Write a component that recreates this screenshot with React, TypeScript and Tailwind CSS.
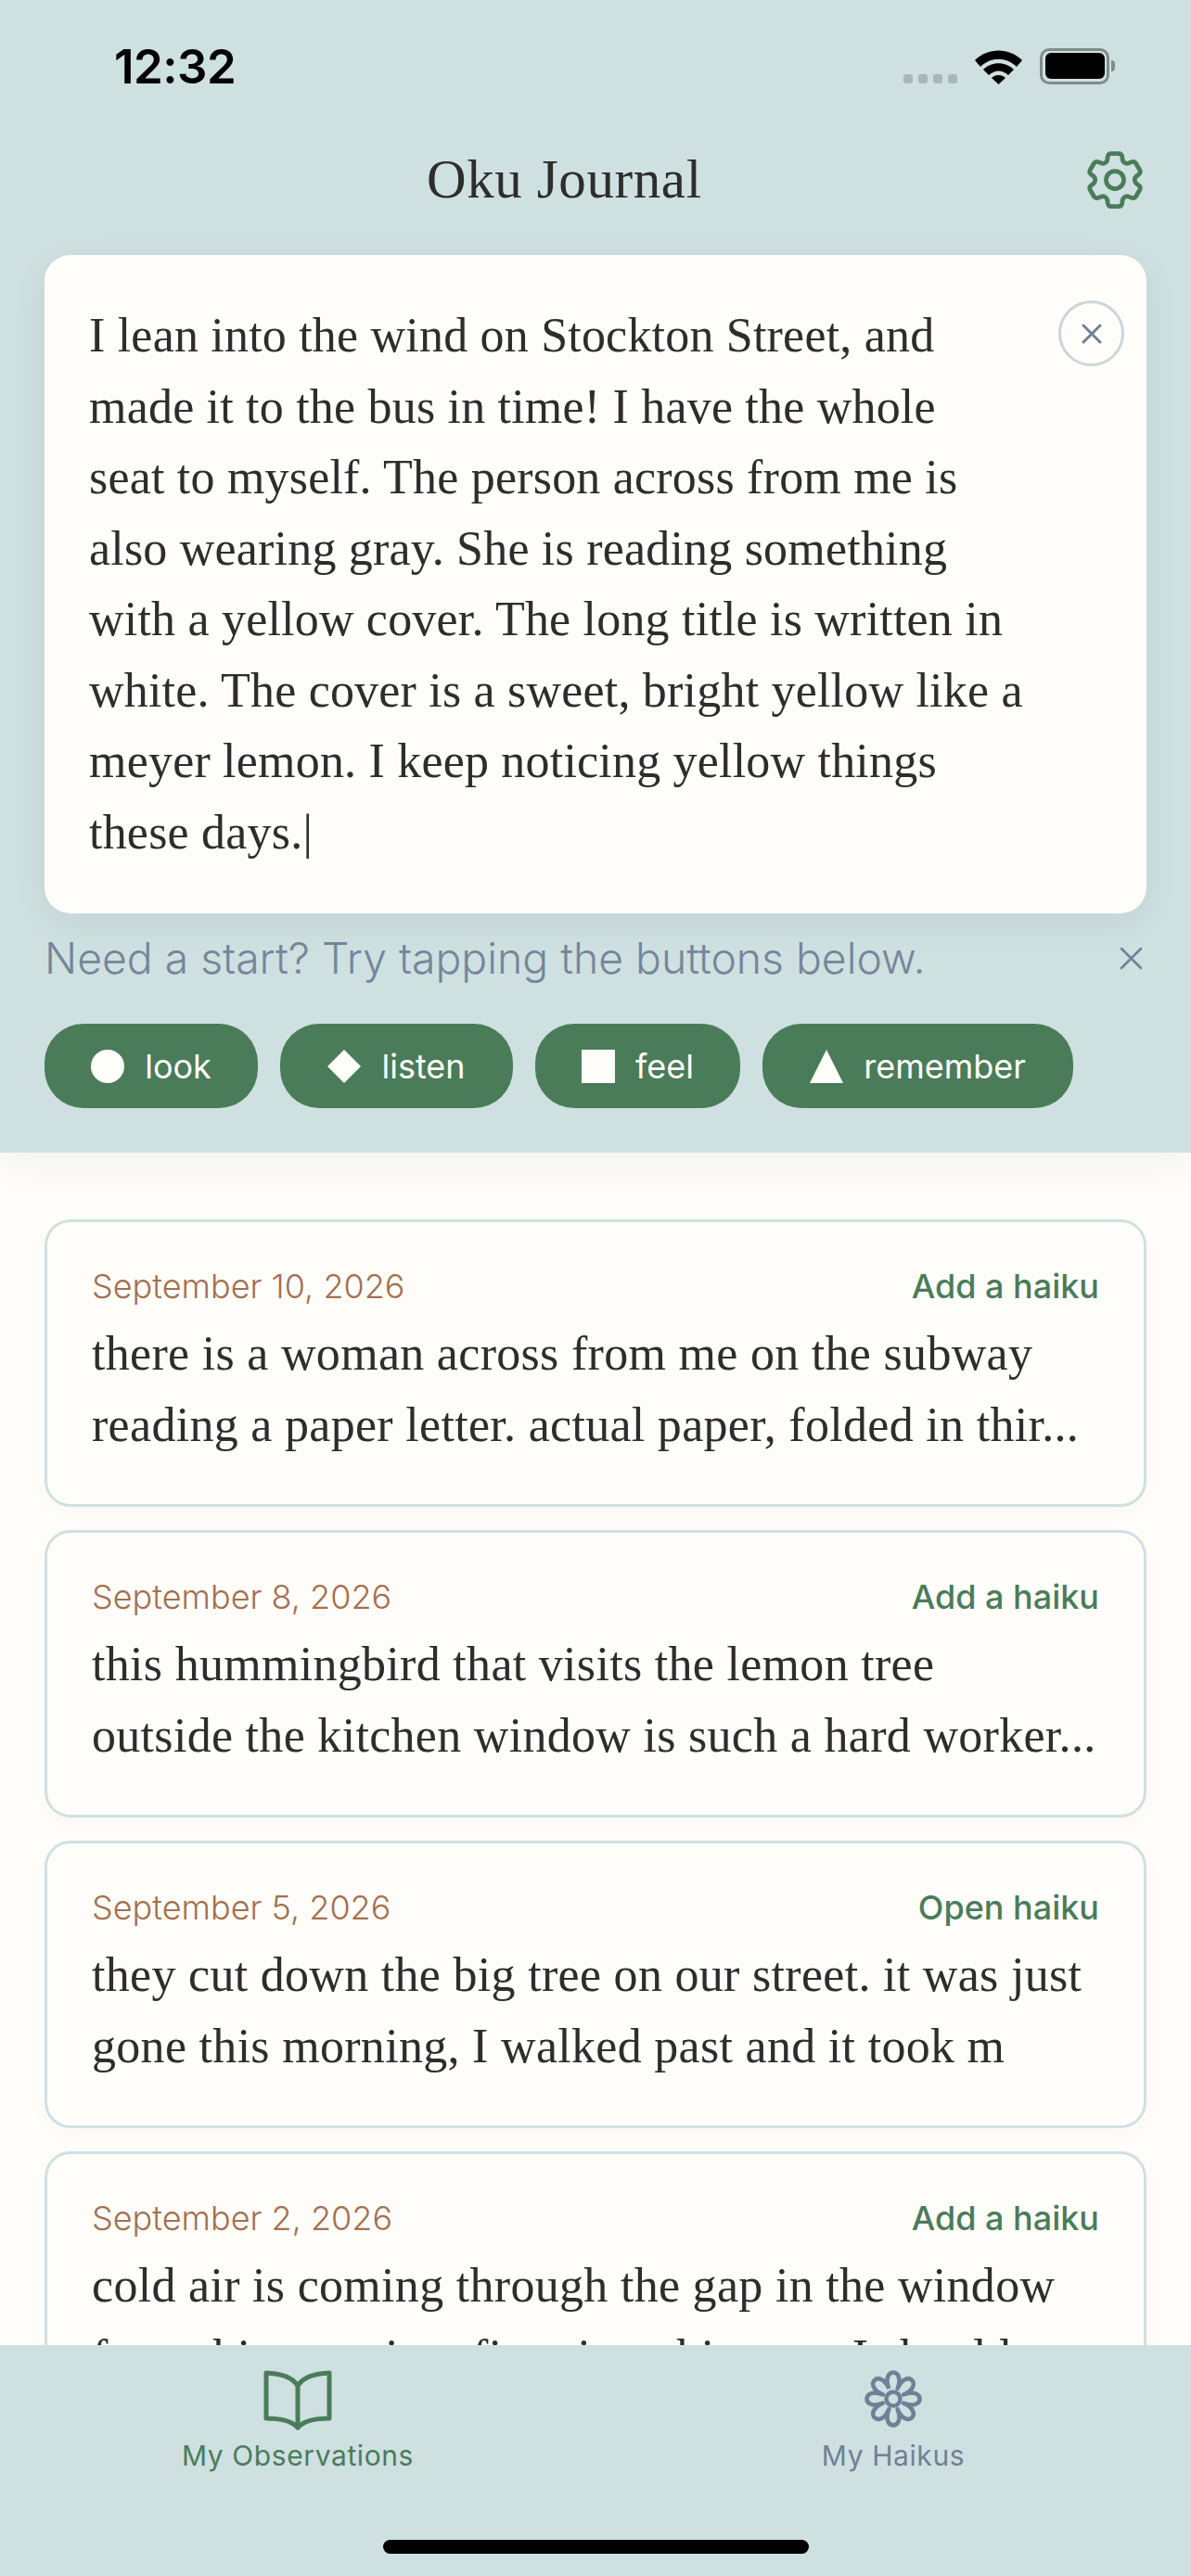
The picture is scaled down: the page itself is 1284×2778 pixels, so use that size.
import { HiOutlineCog6Tooth } from 'react-icons/hi2';

const serif = "font-['Liberation_Serif',serif]";

const draft = [
    'I lean into the wind on Stockton Street, and',
    'made it to the bus in time! I have the whole',
    'seat to myself. The person across from me is',
    'also wearing gray. She is reading something',
    'with a yellow cover. The long title is written in',
    'white. The cover is a sweet, bright yellow like a',
    'meyer lemon. I keep noticing yellow things',
];

const entries = [
    { date: 'September 10, 2026', action: 'Add a haiku', lines: ['there is a woman across from me on the subway', 'reading a paper letter. actual paper, folded in thir...'] },
    { date: 'September 8, 2026', action: 'Add a haiku', lines: ['this hummingbird that visits the lemon tree', 'outside the kitchen window is such a hard worker...'] },
    { date: 'September 5, 2026', action: 'Open haiku', lines: ['they cut down the big tree on our street. it was just', 'gone this morning, I walked past and it took m'] },
    { date: 'September 2, 2026', action: 'Add a haiku', lines: ['cold air is coming through the gap in the window', 'from this morning. first time this year. I should'] },
];

const polar = (r: number, deg: number) => {
    const a = (deg * Math.PI) / 180;
    return `${(31 + r * Math.sin(a)).toFixed(2)} ${(31 - r * Math.cos(a)).toFixed(2)}`;
};

// eight joined petals round the middle ring
const petals = [0, 45, 90, 135, 180, 225, 270, 315]
    .map((a, i) => `${i === 0 ? `M${polar(12, a - 22.5)}` : ''} C${polar(37, a - 22)} ${polar(37, a + 22)} ${polar(12, a + 22.5)}`)
    .join(' ');

const StatusBar = () => {
    return (
        <div className="flex h-[142px] items-center justify-between pl-[123px] pr-[82px]">
            <span className="pt-[3px] font-['Inter',sans-serif] text-[51px] font-semibold text-black tracking-[-0.5px]">12:32</span>
            <div className="flex items-end gap-[19px]">
                <div className="mb-[1px] flex gap-[6px]">
                    <div className="h-[10px] w-[10px] rounded-[3px] bg-[#a9b7b7]"></div>
                    <div className="h-[10px] w-[10px] rounded-[3px] bg-[#a9b7b7]"></div>
                    <div className="h-[10px] w-[10px] rounded-[3px] bg-[#a9b7b7]"></div>
                    <div className="h-[10px] w-[10px] rounded-[3px] bg-[#a9b7b7]"></div>
                </div>
                <svg width="51" height="37" viewBox="0 0 51 37" fill="none">
                    <path d="M0 11 C14 -3 37 -3 51 11 L45 18 C34 7 17 7 6 18 Z" fill="#000" />
                    <path d="M9 21 C18 12 33 12 42 21 L36 27 C29 21 22 21 15 27 Z" fill="#000" />
                    <path d="M18 30 C22 26 29 26 33 30 L25.5 37 Z" fill="#000" />
                </svg>
                <div className="flex items-center">
                    <div className="flex h-[39px] w-[75px] items-center justify-center rounded-[10px] border-[3px] border-[#7f8b8b]">
                        <div className="h-[28px] w-[64px] rounded-[6px] bg-black"></div>
                    </div>
                    <div className="h-[12px] w-[4px] rounded-r-[4px] bg-[#7f8b8b] ml-[2px]"></div>
                </div>
            </div>
        </div>
    );
};

const Pill = ({ label, width, children }: { label: string; width: string; children: React.ReactNode }) => {
    return (
        <button className={`flex h-[91px] ${width} items-center justify-center gap-[22px] rounded-[42px] bg-[#4a7c59] font-['Inter',sans-serif] text-[36px] text-[#fffdf9]`}>
            {children}
            <span>{label}</span>
        </button>
    );
};

const EntryCard = ({ date, action, lines }: { date: string; action: string; lines: string[] }) => {
    return (
        <div className="h-[310px] shrink-0 rounded-[28px] border-[3px] border-[#cfe0e1] bg-[#fffdf9] px-[48px] pt-[47px] shadow-[0_6px_20px_rgba(0,0,0,0.025)]">
            <div className="flex items-center justify-between font-['Inter',sans-serif] text-[36px] leading-[44px]">
                <span className="font-light text-[#a3704f]">{date}</span>
                <span className="font-medium text-[#4a7c59]">{action}</span>
            </div>
            <div className={`${serif} mt-[13px] text-[52px] leading-[76.5px] tracking-[0.3px] text-[#2d2d2d] whitespace-nowrap`}>
                {lines.map((line) => (
                    <div key={line}>{line}</div>
                ))}
            </div>
        </div>
    );
};

export default function App() {
    return (
        <div className="flex h-[2778px] w-[1284px] flex-col overflow-hidden bg-[#fffdf9]">
            <div className="relative z-10 h-[1243px] shrink-0 bg-[#cfe0e1] shadow-[0_12px_40px_rgba(0,0,0,0.05)]">
                <StatusBar />
                <div className="relative h-[133px] pl-[460px]">
                    <h1 className={`${serif} pt-[15px] text-[59px] leading-[72px] tracking-[0.6px] text-[#2d2d2d]`}>Oku Journal</h1>
                    <HiOutlineCog6Tooth className="absolute right-[44px] top-[14px] text-[#4a7c59]" size={76} />
                </div>
                <div className="relative mx-[48px] h-[710px] rounded-[28px] bg-[#fffdf9] pl-[48px] pt-[49px] shadow-[0_10px_40px_rgba(0,0,0,0.06)]">
                    <div className={`${serif} text-[52px] leading-[76.5px] tracking-[0.2px] text-[#2d2d2d] whitespace-nowrap`}>
                        {draft.map((line) => (
                            <div key={line}>{line}</div>
                        ))}
                        <div>these days.<span className="font-light text-[#2d2d2d]">|</span></div>
                    </div>
                    <button className="absolute right-[24px] top-[49px] flex h-[71px] w-[71px] items-center justify-center rounded-full border-[3px] border-[#cbd5dc]">
                        <svg width="24" height="24" viewBox="0 0 24 24" fill="none" stroke="#718096" strokeWidth="3" strokeLinecap="round">
                            <path d="M3 3 L21 21 M21 3 L3 21" />
                        </svg>
                    </button>
                </div>
                <div className="mx-[48px] mt-[21px] flex items-center justify-between">
                    <span className="font-['Inter',sans-serif] text-[46.3px] font-light leading-[54px] text-[#75869a]">Need a start? Try tapping the buttons below.</span>
                    <svg className="mr-[4px]" width="25" height="25" viewBox="0 0 25 25" fill="none" stroke="#718096" strokeWidth="2.5" strokeLinecap="round">
                        <path d="M2 2 L23 23 M23 2 L2 23" />
                    </svg>
                </div>
                <div className="mx-[48px] mt-[44px] flex gap-[24px]">
                    <Pill label="look" width="w-[230px]">
                        <div className="h-[36px] w-[36px] rounded-full bg-[#fffdf9]"></div>
                    </Pill>
                    <Pill label="listen" width="w-[251px]">
                        <svg width="36" height="36" viewBox="0 0 36 36"><path d="M18 0 L36 18 L18 36 L0 18 Z" fill="#fffdf9" /></svg>
                    </Pill>
                    <Pill label="feel" width="w-[221px]">
                        <div className="h-[36px] w-[36px] bg-[#fffdf9]"></div>
                    </Pill>
                    <Pill label="remember" width="w-[335px]">
                        <svg width="36" height="36" viewBox="0 0 36 36"><path d="M18 0 L36 36 L0 36 Z" fill="#fffdf9" /></svg>
                    </Pill>
                </div>
            </div>
            <div className="flex min-h-0 flex-1 flex-col gap-[25px] overflow-hidden px-[48px] pt-[72px]">
                {entries.map((entry) => (
                    <EntryCard key={entry.date} {...entry} />
                ))}
            </div>
            <div className="relative z-10 h-[249px] shrink-0 bg-[#cfe0e1]">
                <div className="flex">
                    <div className="flex w-1/2 flex-col items-center pt-[27px]">
                        <svg width="76" height="66" viewBox="0 0 76 66" fill="none" stroke="#4a7c59" strokeWidth="5" strokeLinejoin="round" strokeLinecap="round">
                            <path d="M38 17 C32 7 20 4 4 3 V52 C20 52 32 55 38 62 C44 55 56 52 72 52 V3 C56 4 44 7 38 17 Z M38 17 V60" />
                        </svg>
                        <span className="mt-[7px] font-['Inter',sans-serif] text-[30px] leading-[38px] tracking-[0.6px] text-[#4a7c59]">My Observations</span>
                    </div>
                    <div className="flex w-1/2 flex-col items-center pt-[27px]">
                        <svg width="62" height="62" viewBox="0 0 62 62" fill="none" stroke="#718096" strokeWidth="4.5" strokeLinejoin="round">
                            <path d={petals} />
                            <circle cx="31" cy="31" r="7.5" />
                        </svg>
                        <span className="mt-[11px] font-['Inter',sans-serif] text-[30px] leading-[38px] tracking-[0.6px] text-[#718096]">My Haikus</span>
                    </div>
                </div>
                <div className="absolute bottom-[24px] left-[413px] h-[15px] w-[459px] rounded-full bg-black"></div>
            </div>
        </div>
    );
}
